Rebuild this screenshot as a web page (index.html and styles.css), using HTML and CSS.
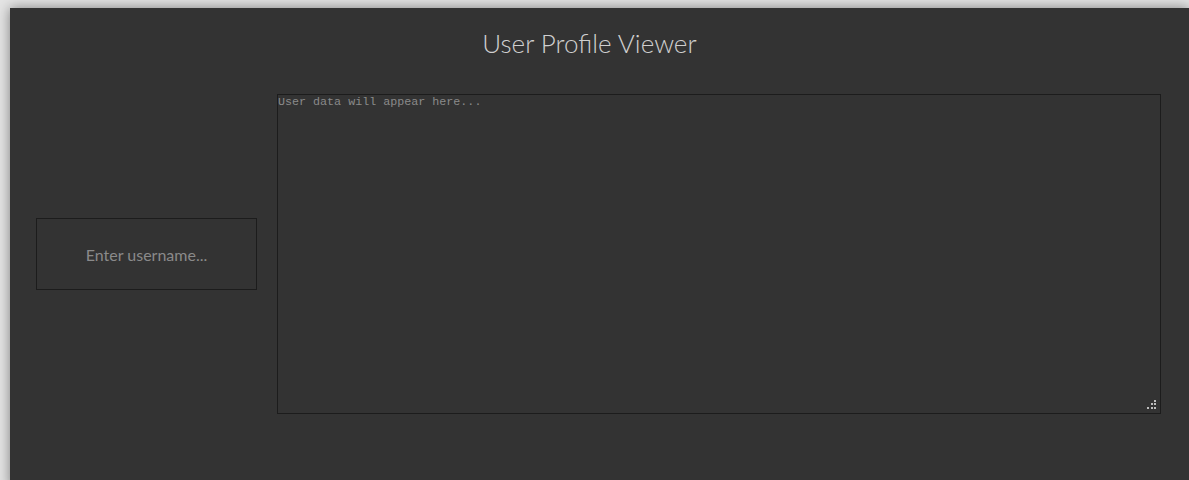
FILE: index.html
```html
<!DOCTYPE html>
<html lang="en">
<head>
<meta charset="utf-8">
<title>User Profile Viewer</title>
<link rel="stylesheet" href="styles.css">
</head>
<body>
<div class="shell">
  <section class="panel">
    <h1 class="title">User Profile Viewer</h1>
    <div class="workspace">
      <input class="username" type="text" placeholder="Enter username...">
      <div class="output-wrap">
        <textarea class="output" placeholder="User data will appear here..."></textarea>
        <svg class="grip" width="10" height="10" viewBox="0 0 10 10" aria-hidden="true">
          <rect x="7" y="0" width="2" height="2"/>
          <rect x="4" y="3" width="2" height="2"/>
          <rect x="7" y="3" width="2" height="2"/>
          <rect x="0" y="7" width="2" height="2"/>
          <rect x="4" y="7" width="2" height="2"/>
          <rect x="7" y="7" width="2" height="2"/>
        </svg>
      </div>
    </div>
  </section>
</div>
</body>
</html>
```

FILE: styles.css
```css
html, body {
  margin: 0;
  height: 100%;
  overflow: hidden;
}

body {
  background: #e4e4e4;
  font-family: Lato, "Open Sans", sans-serif;
}

.shell {
  padding: 8px 0 0 10px;
}

.panel {
  background: #333333;
  min-height: 480px;
  box-shadow: 0 0 12px rgba(0, 0, 0, 0.45);
  display: flex;
  flex-direction: column;
}

.title {
  margin: 0;
  padding: 20px 20px 0 0;
  font-size: 26px;
  font-weight: 300;
  line-height: 30px;
  text-align: center;
  color: #cfcfcf;
}

.workspace {
  margin-top: 36px;
  padding-left: 26px;
  display: flex;
  align-items: center;
  gap: 20px;
}

.username {
  box-sizing: border-box;
  width: 221px;
  height: 72px;
  margin: 0;
  padding: 0;
  border: 1px solid #1c1c1c;
  background: transparent;
  color: #cfcfcf;
  font-family: Lato, sans-serif;
  font-size: 16px;
  text-align: center;
  outline: none;
}

.username::placeholder {
  color: #8a8a8a;
}

.output-wrap {
  position: relative;
  display: flex;
}

.output {
  box-sizing: border-box;
  width: 884px;
  height: 320px;
  margin: 0;
  padding: 0;
  border: 1px solid #1c1c1c;
  background: transparent;
  color: #cfcfcf;
  font-family: "Liberation Mono", monospace;
  font-size: 11.7px;
  line-height: 14px;
  outline: none;
  resize: none;
}

.output::placeholder {
  color: #8a8a8a;
}

/* resize grip drawn over the textarea's corner */
.grip {
  position: absolute;
  right: 4px;
  bottom: 4px;
  fill: #bdbdbd;
  pointer-events: none;
}
```
